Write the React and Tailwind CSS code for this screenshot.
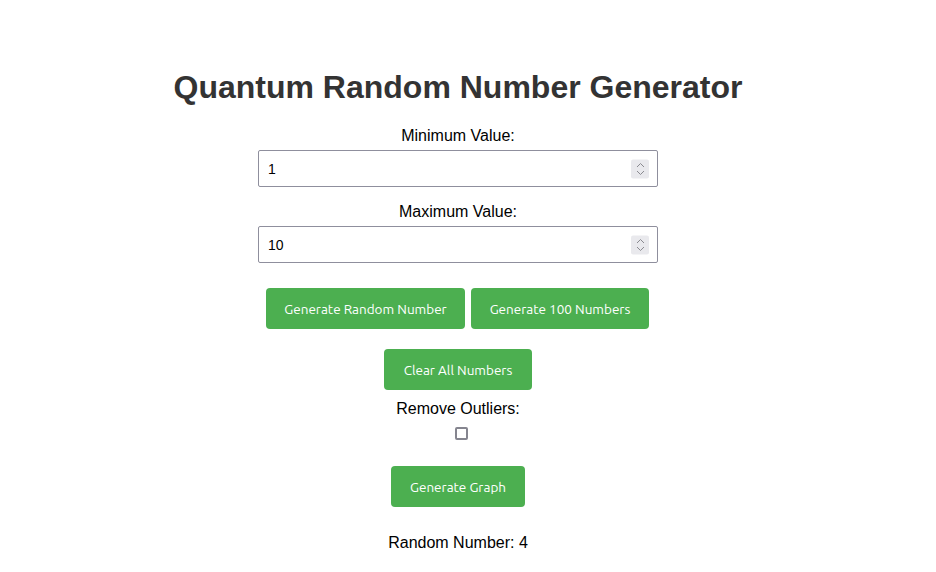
function Spinner() {
  return (
    <span className="absolute right-[9px] top-1/2 -translate-y-1/2 w-[18px] h-[19px] bg-[#e9e9ed] rounded-[2px] flex flex-col items-center justify-center gap-[3px] pointer-events-none">
      <svg width="9" height="5" viewBox="0 0 9 5" fill="none" stroke="#8a8a90" strokeWidth="1">
        <path d="M1 4.5 L4.5 1 L8 4.5" />
      </svg>
      <svg width="9" height="5" viewBox="0 0 9 5" fill="none" stroke="#8a8a90" strokeWidth="1">
        <path d="M1 0.5 L4.5 4 L8 0.5" />
      </svg>
    </span>
  );
}

function NumberInput({ value, className }) {
  return (
    <div className={"relative w-[400px] h-[37px] " + className}>
      <input
        type="text"
        defaultValue={value}
        className="w-full h-full border border-[#8f8f9d] rounded-[2px] px-[9px] text-[14px] text-black bg-white font-['Liberation_Sans',Arial,sans-serif]"
      />
      <Spinner />
    </div>
  );
}

export default function App() {
  const btn =
    "h-[41px] px-0 pt-[1px] rounded-[4px] bg-[#4caf50] text-white text-[13.5px] font-['Ubuntu','Noto_Sans',sans-serif] whitespace-nowrap";
  return (
    <div className="w-[916px] h-[572px] bg-white font-['Liberation_Sans',Arial,sans-serif] text-black flex flex-col items-center">
      <h1 className="mt-[67px] text-[32px] leading-[40px] font-bold text-[#333]">
        Quantum Random Number Generator
      </h1>
      <div className="mt-[20px] text-[16px] leading-[18px]">Minimum Value:</div>
      <NumberInput value="1" className="mt-[5px]" />
      <div className="mt-[16px] text-[16px] leading-[18px]">Maximum Value:</div>
      <NumberInput value="10" className="mt-[5px]" />
      <div className="mt-[25px] ml-[-1px] flex gap-[6px]">
        <button className={btn + " w-[199px]"}>Generate Random Number</button>
        <button className={btn + " w-[178px]"}>Generate 100 Numbers</button>
      </div>
      <button className={btn + " w-[148px] mt-[20px]"}>Clear All Numbers</button>
      <div className="mt-[10px] text-[16px] leading-[18px]">Remove Outliers:</div>
      <input
        type="checkbox"
        className="mt-[9px] ml-[7px] w-[13px] h-[13px] appearance-none border-2 border-[#85858f] rounded-[2px] bg-white"
      />
      <button className={btn + " w-[134px] mt-[26px]"}>Generate Graph</button>
      <div className="mt-[27px] text-[16px] leading-[18px]">Random Number: 4</div>
    </div>
  );
}
